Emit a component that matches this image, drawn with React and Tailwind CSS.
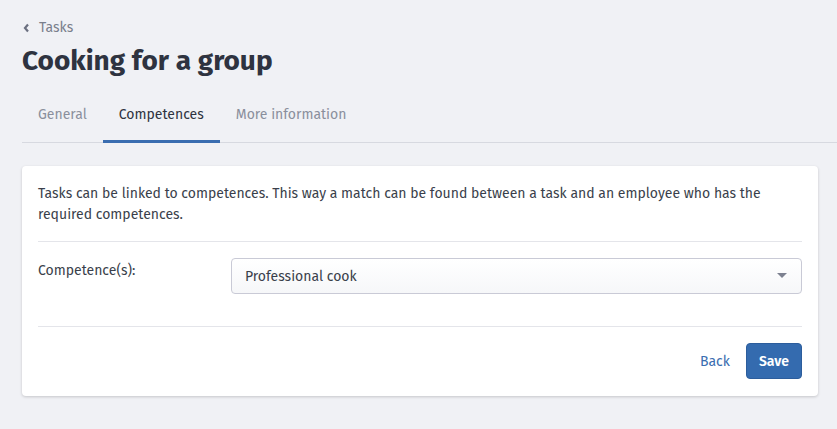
import React from "react";

export default function App() {
  return (
    <div className="min-h-[429px] w-full bg-[#f0f1f5] text-[#3a3f4b]" style={{ fontFamily: '"Fira Sans", "Open Sans", "Noto Sans", sans-serif' }}>
      <div className="pt-[18px] pl-[22px]">
        <a className="flex items-center gap-[9px] text-[14px] leading-[20px] text-[#7a7f8c]">
          <svg width="7" height="10" viewBox="0 0 7 10" className="ml-[1px]">
            <path d="M5 1.5 L2 5 L5 8.5" fill="none" stroke="#6b7080" strokeWidth="2.2" />
          </svg>
          <span>Tasks</span>
        </a>
        <h1 className="mt-[6px] text-[28px] leading-[34px] font-bold text-[#2e3340]">Cooking for a group</h1>
      </div>
      <div className="ml-[22px] mt-[26px] flex border-b border-[#d7d9e0] text-[14px]">
        <div className="px-[16px] pb-[17px] text-[#8a8f9c]">General</div>
        <div className="px-[16px] pb-[15px] border-b-[3px] border-[#3a6db0] -mb-[1px] text-[#2e3340]">Competences</div>
        <div className="px-[16px] pb-[17px] text-[#8a8f9c]">More information</div>
      </div>
      <div className="ml-[22px] mr-[19px] mt-[23px] rounded-[4px] bg-white shadow-[0_1px_3px_rgba(0,0,0,0.18)] px-[16px]">
        <p className="pt-[17px] pb-[16px] text-[14px] leading-[21px] text-[#3a3f4b]">
          Tasks can be linked to competences. This way a match can be found between a task and an employee who has the required competences.
        </p>
        <div className="border-t border-[#e4e5ea]" />
        <div className="flex pt-[16px] pb-[32px]">
          <div className="w-[193px] pt-[3px] text-[14px] leading-[20px]">Competence(s):</div>
          <div className="flex h-[36px] flex-1 items-center justify-between rounded-[4px] border border-[#c9cad6] bg-gradient-to-b from-white to-[#f6f7f9] pl-[13px] pr-[14px] text-[14px]">
            <span>Professional cook</span>
            <svg width="10" height="6" viewBox="0 0 10 6">
              <path d="M0 0 H10 L5 5 Z" fill="#7d8190" />
            </svg>
          </div>
        </div>
        <div className="border-t border-[#e4e5ea]" />
        <div className="flex items-center justify-end gap-[16px] pt-[16px] pb-[17px]">
          <a className="text-[14px] text-[#3a6db0]">Back</a>
          <button className="h-[36px] rounded-[4px] border border-[#2c5d9c] bg-[#346baf] px-[12px] text-[14px] font-semibold text-white">Save</button>
        </div>
      </div>
    </div>
  );
}
